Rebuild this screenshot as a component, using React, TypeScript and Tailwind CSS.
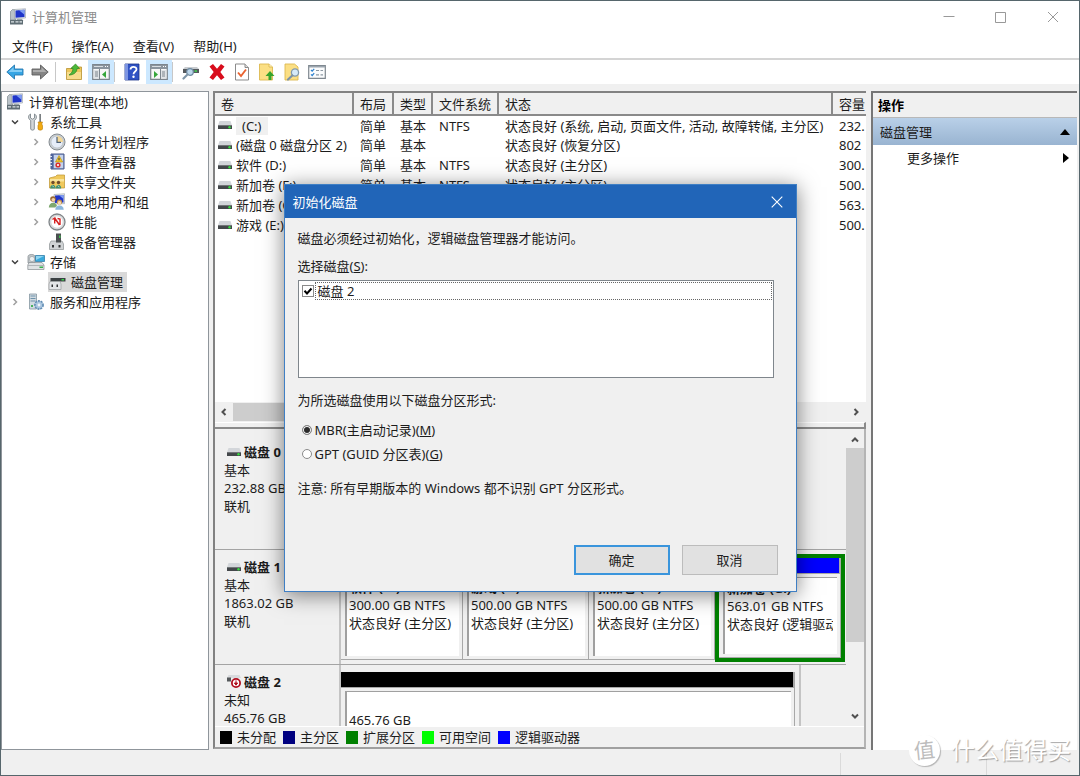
import React from "react";

type IconProps = { className?: string };

function ComputerIcon({ className = "h-[18px] w-[18px]" }: IconProps) {
  return (
    <svg viewBox="0 0 18 18" className={className}>
      <path d="M1.500 3.500l2-2 3 .5V12h-5z" fill="#b9c2c8" stroke="#6d7980" strokeWidth=".6" />
      <path d="M5.500 1.500l11-.8V10l-11 .8z" fill="#e2e6ea" stroke="#8a949b" strokeWidth=".5" />
      <path d="M6.500 2.500l9-.7v7.300l-9 .7z" fill="#1f35c9" />
      <path d="M10 2.200l5.500-.4v5z" fill="#7f9df2" />
      <path d="M8 11h5l1.500 2H7z" fill="#9aa5ac" />
      <path d="M1 12h13v4.500H1z" fill="#5f6d74" />
      <path d="M2 13.200h3v1.200H2zM6.500 13.200h3v1.200h-3zM10.500 13.200h2.500v1.200h-2.500z" fill="#dde3e6" />
    </svg>
  );
}

function ToolsIcon() {
  return (
    <svg viewBox="0 0 18 18" className="h-[18px] w-[18px]">
      <path d="M3.500 1v4l2 1.200 2-1.200V1c2.200 1 3 4.500-.2 6.500V16c0 1.500-3.600 1.500-3.600 0V7.500C.5 5.500 1.300 2 3.500 1z" fill="#d3d7d9" stroke="#7d868b" strokeWidth=".9" />
      <path d="M12.300 1h1.700v8h-1.700z" fill="#7a7f82" />
      <path d="M11 9h4.500l-.8 2 .8 1.500V16c0 1.500-4.500 1.500-4.500 0v-3.500l.8-1.500z" fill="#f2ab12" stroke="#b87b06" strokeWidth=".6" />
    </svg>
  );
}

function ClockIcon() {
  return (
    <svg viewBox="0 0 18 18" className="h-[18px] w-[18px]">
      <circle cx="9" cy="9" r="8" fill="#c9ced2" stroke="#858b90" />
      <circle cx="9" cy="9" r="6" fill="#e6edf8" stroke="#b3bac0" strokeWidth=".6" />
      <path d="M9 9V3a6 6 0 0 1 6 6z" fill="#f3d795" />
      <path d="M9 4v5.300h4" fill="none" stroke="#4c6079" strokeWidth="1.200" />
    </svg>
  );
}

function EventIcon() {
  return (
    <svg viewBox="0 0 18 18" className="h-[18px] w-[18px]">
      <path d="M3 1h13v15H3z" fill="#93a9d2" stroke="#48598b" />
      <path d="M6 2h9v13H6z" fill="#c6d3ec" />
      <path d="M3 1h2.500v15H3z" fill="#4f639b" />
      <path d="M2 3.500h2M2 6.500h2M2 9.500h2M2 12.500h2" stroke="#dfe5f2" strokeWidth="1" />
      <path d="M11 2.500l3.700 6.500H7.500z" fill="#f5c928" stroke="#b38b0a" strokeWidth=".6" />
      <path d="M11 4.800v2.500" stroke="#333" strokeWidth="1" />
      <circle cx="10" cy="12" r="2.600" fill="#d92f2f" />
      <path d="M9 11l2 2m0-2l-2 2" stroke="#fff" strokeWidth=".8" />
    </svg>
  );
}

function SharedIcon() {
  return (
    <svg viewBox="0 0 18 18" className="h-[18px] w-[18px]">
      <path d="M1.500 5l6-1.500L9 2h7.500v13h-15z" fill="#f0c95c" stroke="#bb9430" strokeWidth=".7" />
      <path d="M2 6h14v2.500H2z" fill="#f9e49c" />
      <circle cx="5" cy="9.500" r="1.700" fill="#6e4c2d" />
      <circle cx="10.500" cy="9.500" r="1.700" fill="#6e4c2d" />
      <path d="M2.200 15.500c0-5 5.400-5 5.400 0zM7.800 15.500c0-5 5.400-5 5.400 0z" fill="#3f8f70" />
      <path d="M4.300 12.500l1.500 1.700M9.800 12.500l1.500 1.700" stroke="#dff1e8" strokeWidth=".8" />
    </svg>
  );
}

function UsersIcon() {
  return (
    <svg viewBox="0 0 18 18" className="h-[18px] w-[18px]">
      <path d="M6 1.500l10.500-.8v10L6 11z" fill="#dfe3e6" stroke="#8a949b" strokeWidth=".5" />
      <path d="M7 2.500l8.500-.6v7.500L7 10z" fill="#1f35c9" />
      <path d="M11 2.200l4.500-.3v4z" fill="#7f9df2" />
      <circle cx="5" cy="6" r="2.800" fill="#9b6a34" />
      <circle cx="5.300" cy="6.800" r="1.800" fill="#f1cfa7" />
      <path d="M.8 14.500c0-6.500 8.500-6.500 8.500 0z" fill="#7da86f" />
      <circle cx="11.500" cy="9" r="2.600" fill="#c39149" />
      <circle cx="11.500" cy="9.800" r="1.700" fill="#f5d8b4" />
      <path d="M7 17c0-6.500 9-6.500 9 0z" fill="#8ab6dc" stroke="#fff" strokeWidth=".5" />
    </svg>
  );
}

function PerfIcon() {
  return (
    <svg viewBox="0 0 18 18" className="h-[18px] w-[18px]">
      <circle cx="9" cy="9" r="8" fill="#e0e2e4" stroke="#7f8487" strokeWidth="1.300" />
      <circle cx="9" cy="9" r="6.200" fill="#fff" stroke="#bcbfc1" strokeWidth=".6" />
      <path d="M4.500 6.500l2.200-1.500v5.500M6.700 5l4.800 7M9.500 5.500l2.500.500v6" fill="none" stroke="#d61f1f" strokeWidth="1.400" />
    </svg>
  );
}

function DeviceIcon() {
  return (
    <svg viewBox="0 0 18 18" className="h-[18px] w-[18px]">
      <path d="M8 .5h5V9H8z" fill="#4b4f51" />
      <path d="M11 2.500h1.500V5H11z" fill="#3fbf4f" />
      <path d="M3 8h11l1.500 3v5.500h-14V11z" fill="#d0d3d5" stroke="#8b9092" strokeWidth=".7" />
      <path d="M8 7h5v2.500H8z" fill="#4b4f51" />
      <path d="M4 12h2v2.500H4zM10.500 12h2v2.500h-2z" fill="#303335" />
    </svg>
  );
}

function StorageIcon() {
  return (
    <svg viewBox="0 0 18 18" className="h-[18px] w-[18px]">
      <path d="M1 3.500C1 .8 8 .8 8 3.500V10H1z" fill="#c2c7ca" stroke="#7e878c" strokeWidth=".7" />
      <circle cx="5" cy="6" r="2.600" fill="#eceff0" stroke="#8e979b" strokeWidth=".6" />
      <path d="M8.500 2.500h9v6h-9z" fill="#38a9dc" stroke="#2774a0" strokeWidth=".7" />
      <path d="M9 3h8L9 7z" fill="#91d6f2" />
      <path d="M2 9.500h13l2 2.500v4.500H.8V12z" fill="#dfe2e4" stroke="#858c90" strokeWidth=".7" />
      <path d="M1 12.500h16" stroke="#a4aaad" strokeWidth=".8" />
      <path d="M12.500 13.500H16V15h-3.500z" fill="#37b24d" />
    </svg>
  );
}

function DiskMgmtIcon() {
  return (
    <svg viewBox="0 0 18 18" className="h-[18px] w-[18px]">
      <path d="M4 3.500h12L17.500 5H2.500z" fill="#d4d7d9" />
      <path d="M2.500 5h15v3.500h-15z" fill="#3c4143" />
      <path d="M13.500 6h2.500v1.500h-2.500z" fill="#38d04c" />
      <path d="M2 8.500h10l1 2.500v5.500H1V11z" fill="#e4e6e8" stroke="#8d9294" strokeWidth=".6" />
      <path d="M3.500 11.500H5V14H3.500zM8.500 11.500H10V14H8.500z" fill="#303335" />
    </svg>
  );
}

function ServicesIcon() {
  return (
    <svg viewBox="0 0 18 18" className="h-[18px] w-[18px]">
      <path d="M2.500 1h7v15h-7z" fill="#d2dbe2" stroke="#8495a1" strokeWidth=".8" />
      <path d="M3.500 3h5M3.500 5.500h5M3.500 8h5" stroke="#6e93ab" strokeWidth="1.200" />
      <path d="M4 12h2v2H4z" fill="#47b35c" />
      <circle cx="12" cy="12" r="3.900" fill="#a9c5df" stroke="#5f8bb2" strokeWidth="2" strokeDasharray="1.900 .9" />
      <circle cx="12" cy="12" r="3.300" fill="#a9c5df" />
      <circle cx="12" cy="12" r="1.400" fill="#f2f6fa" />
    </svg>
  );
}

function DriveIcon() {
  return (
    <svg viewBox="0 0 14 9" className="h-[9px] w-[14px] shrink-0">
      <path d="M1.500 0h11L14 4.500H0z" fill="#d3d6da" />
      <path d="M0 4.200h14v3.800H0z" fill="#44484b" />
      <path d="M0 4.200h14v.8H0z" fill="#777b7e" />
      <circle cx="11.500" cy="6.300" r="1.200" fill="#35dc3f" />
    </svg>
  );
}

function DriveErrorIcon() {
  return (
    <svg viewBox="0 0 14 14" className="h-[14px] w-[14px] shrink-0">
      <path d="M1.500 0h11L14 3H0z" fill="#d8dadd" />
      <path d="M0 2.500h4v4H0z" fill="#55595b" />
      <circle cx="9" cy="8" r="4.100" fill="#fff" stroke="#b01020" strokeWidth="1.800" />
      <path d="M9 5.300v3M7.400 8L9 10.200 10.600 8z" stroke="#b01020" strokeWidth="1" fill="#b01020" />
    </svg>
  );
}

function BackIcon() {
  return (
    <svg viewBox="0 0 18 16" className="h-4 w-[18px]">
      <path d="M.8 8L8.500 1v4H17v6H8.500v4z" fill="#36a5e4" stroke="#2778b0" strokeWidth=".9" strokeLinejoin="round" />
      <path d="M2.500 8L7.500 3.300V6H16v2z" fill="#83cdf5" />
    </svg>
  );
}

function ForwardIcon() {
  return (
    <svg viewBox="0 0 18 16" className="h-4 w-[18px]">
      <path d="M17.200 8L9.500 1v4H1v6h8.500v4z" fill="#858585" stroke="#5e5e5e" strokeWidth=".9" strokeLinejoin="round" />
      <path d="M15.500 8l-5-4.700V6H2v2z" fill="#adadad" />
    </svg>
  );
}

function UpFolderIcon() {
  return (
    <svg viewBox="0 0 18 18" className="h-[18px] w-[18px]">
      <path d="M1.500 5.500h5l1-1.500h9v12.500h-15z" fill="#eec75c" stroke="#b99331" strokeWidth=".8" />
      <path d="M2 9h14v7H2z" fill="#f7dc8c" />
      <path d="M4 12c1-1 4-2.500 4-6.500H5.800L10.500 1l4 4.500H12c0 4-3.500 6.500-8 6.500z" fill="#4cb93a" stroke="#2e8420" strokeWidth=".7" />
    </svg>
  );
}

function PaneIcon({ mirrored = false }: { mirrored?: boolean }) {
  return (
    <svg viewBox="0 0 18 16" className="h-4 w-[18px]">
      <path d="M.7.700h16.600v14.600H.7z" fill="#f7f7f7" stroke="#7c858d" strokeWidth="1.200" />
      <path d="M1 1h16v4H1z" fill="#8a949e" />
      <path d="M2 2.500h9" stroke="#d9dee2" />
      <path d="M13 2.500h3" stroke="#fff" strokeDasharray="1 1" />
      {mirrored ? (
        <>
          <path d="M11 6h5v8.500h-5z" fill="#dfe3e6" />
          <path d="M10.500 5v10M12 8h3M12 10h3M12 12h3" stroke="#7c858d" />
          <path d="M4 7l4 3.500L4 14z" fill="#35a63a" />
        </>
      ) : (
        <>
          <path d="M2 6h5v8.500H2z" fill="#dfe3e6" />
          <path d="M7.500 5v10M3 8h3M3 10h3M3 12h3" stroke="#7c858d" />
          <path d="M14 7l-4 3.500 4 3.500z" fill="#35a63a" />
        </>
      )}
    </svg>
  );
}

function HelpIcon() {
  return (
    <svg viewBox="0 0 16 18" className="h-[18px] w-4">
      <path d="M1 1h14v16H1z" fill="#2f52c4" stroke="#1d368c" strokeWidth=".8" />
      <path d="M1 1h3v16H1z" fill="#7d95e2" />
      <path d="M6.500 6.500c0-3.500 6-3.500 6-.2C12.500 8.500 9.500 8.500 9.500 11.200" fill="none" stroke="#fff" strokeWidth="1.800" />
      <circle cx="9.500" cy="13.800" r="1.200" fill="#fff" />
    </svg>
  );
}

function ConnectIcon() {
  return (
    <svg viewBox="0 0 18 18" className="h-[18px] w-[18px]">
      <path d="M3 4h12l2 2H1z" fill="#c8ccd0" />
      <path d="M1 6h16v4H1z" fill="#55595d" />
      <path d="M12.500 7.300H15v1.500h-2.500z" fill="#3fd44d" />
      <circle cx="8" cy="9" r="3.300" fill="#bcd7ec" stroke="#6f8aa0" strokeWidth="1.200" />
      <path d="M5.500 11.500L1.500 15.500" stroke="#7e95a8" strokeWidth="2.200" strokeLinecap="round" />
    </svg>
  );
}

function DeleteIcon() {
  return (
    <svg viewBox="0 0 18 18" className="h-[18px] w-[18px]">
      <path d="M1.500 3.500L5 1l4 4.800L13 1l3.500 2.500L12.300 9l4.200 5.500L13 17l-4-4.800L5 17l-3.500-2.500L5.700 9z" fill="#d80d1c" />
    </svg>
  );
}

function CheckDocIcon() {
  return (
    <svg viewBox="0 0 16 18" className="h-[18px] w-4">
      <path d="M1.500 1h9.500l3.500 3.500V17h-13z" fill="#fff" stroke="#8b8b8b" />
      <path d="M11 1v3.500h3.500" fill="#ddd" stroke="#8b8b8b" />
      <path d="M4 9.500l3 3.500 5-6.500" fill="none" stroke="#ea6330" strokeWidth="1.900" />
    </svg>
  );
}

function ExportIcon() {
  return (
    <svg viewBox="0 0 17 18" className="h-[18px] w-[17px]">
      <path d="M1.500 1H11l3.500 3v13h-13z" fill="#fbdf84" stroke="#dcb950" strokeWidth=".9" />
      <path d="M11 1v3h3.500" fill="#fff3c6" stroke="#dcb950" strokeWidth=".9" />
      <path d="M12 8l4.500 5h-3v4h-3v-4h-3z" fill="#37a42c" />
    </svg>
  );
}

function SearchDocIcon() {
  return (
    <svg viewBox="0 0 17 18" className="h-[18px] w-[17px]">
      <path d="M2 1h9.500L15 4v13H2z" fill="#fbdf84" stroke="#dcb950" strokeWidth=".9" />
      <circle cx="12" cy="9.500" r="3.600" fill="#d6eaf8" stroke="#8199ad" strokeWidth="1.300" />
      <path d="M9.300 12.500L5 16.500" stroke="#7d93a6" strokeWidth="2.200" strokeLinecap="round" />
    </svg>
  );
}

function ListIcon() {
  return (
    <svg viewBox="0 0 18 14" className="h-[14px] w-[18px]">
      <path d="M.7.700h16.600v12.600H.7z" fill="#fbfcfd" stroke="#7f8890" strokeWidth="1.200" />
      <path d="M1 1h16v1.500H1z" fill="#9aa4ad" />
      <path d="M3 5l1.200 1.200 2-2.400M3 9.300l1.200 1.200 2-2.400" fill="none" stroke="#2f83cf" strokeWidth="1.200" />
      <path d="M8 5.500h3M12.500 5.500H15M8 9.800h3M12.500 9.800H15" stroke="#8c98a3" strokeWidth="1.200" />
    </svg>
  );
}

function Chevron({ dir, className }: { dir: "up" | "down" | "left" | "right"; className: string }) {
  const d = {
    up: "M2 6.500L5 3.500l3 3",
    down: "M2 3.500l3 3 3-3",
    left: "M6.500 2l-3 3 3 3",
    right: "M3.500 2l3 3-3 3",
  }[dir];
  return (
    <svg viewBox="0 0 10 10" className={className} fill="none" stroke="currentColor">
      <path d={d} />
    </svg>
  );
}

type Node = { label: string; icon: React.ReactNode; level: 0 | 1 | 2; state?: "open" | "closed"; selected?: boolean };

const tree: Node[] = [
  { label: "计算机管理(本地)", icon: <ComputerIcon />, level: 0 },
  { label: "系统工具", icon: <ToolsIcon />, level: 1, state: "open" },
  { label: "任务计划程序", icon: <ClockIcon />, level: 2, state: "closed" },
  { label: "事件查看器", icon: <EventIcon />, level: 2, state: "closed" },
  { label: "共享文件夹", icon: <SharedIcon />, level: 2, state: "closed" },
  { label: "本地用户和组", icon: <UsersIcon />, level: 2, state: "closed" },
  { label: "性能", icon: <PerfIcon />, level: 2, state: "closed" },
  { label: "设备管理器", icon: <DeviceIcon />, level: 2 },
  { label: "存储", icon: <StorageIcon />, level: 1, state: "open" },
  { label: "磁盘管理", icon: <DiskMgmtIcon />, level: 2, selected: true },
  { label: "服务和应用程序", icon: <ServicesIcon />, level: 1, state: "closed" },
];

function TreeRow({ node }: { node: Node }) {
  return (
    <li className={`flex h-5 items-center ${node.level === 2 ? "pl-[25px]" : "pl-1"}`}>
      {node.level > 0 && (
        <span className="flex w-[21px] items-center justify-center pr-1">
          {node.state === "open" && <Chevron dir="down" className="h-[10px] w-[10px] stroke-[1.5] text-[#404040]" />}
          {node.state === "closed" && <Chevron dir="right" className="h-[10px] w-[10px] stroke-[1.5] text-[#a0a0a0]" />}
        </span>
      )}
      <span className={`flex h-5 items-center gap-[5px] pr-1 ${node.selected ? "bg-[#d9d9d9]" : ""}`}>
        {node.icon}
        {node.label}
      </span>
    </li>
  );
}

const volumes = [
  ["(C:)", "NTFS", "状态良好 (系统, 启动, 页面文件, 活动, 故障转储, 主分区)", "232."],
  ["(磁盘 0 磁盘分区 2)", "", "状态良好 (恢复分区)", "802"],
  ["软件 (D:)", "NTFS", "状态良好 (主分区)", "300."],
  ["新加卷 (F:)", "NTFS", "状态良好 (主分区)", "500."],
  ["新加卷 (G:)", "NTFS", "状态良好 (逻辑驱动器)", "563."],
  ["游戏 (E:)", "NTFS", "状态良好 (主分区)", "500."],
];

const headCell = "border-r-2 border-[#8a8a8a] pl-[6px] text-left font-normal";

function VolumeList() {
  return (
    <section className="flex h-[338px] shrink-0 flex-col border-t-2 border-l-2 border-[#828282]">
      <div className="min-h-0 flex-1 overflow-hidden bg-white">
        <table className="w-full table-fixed border-collapse whitespace-nowrap">
          <colgroup>
            <col className="w-[138px]" />
            <col className="w-10" />
            <col className="w-[39px]" />
            <col className="w-[66px]" />
            <col className="w-[334px]" />
            <col />
          </colgroup>
          <thead>
            <tr className="h-[22px] border-b-2 border-[#8a8a8a] bg-[#f0f0f0]">
              <th className={headCell}>卷</th>
              <th className={headCell}>布局</th>
              <th className={headCell}>类型</th>
              <th className={headCell}>文件系统</th>
              <th className={headCell}>状态</th>
              <th className="overflow-hidden pl-[6px] text-left font-normal">容量</th>
            </tr>
          </thead>
          <tbody>
            {volumes.map(([name, fs, status, size], i) => (
              <tr key={i} className="h-5">
                <td className="overflow-hidden pl-[3px]">
                  <span className="flex items-center gap-1">
                    <DriveIcon />
                    <span className={i === 0 ? "bg-[#f0f0f0] px-[6px]" : ""}>{name}</span>
                  </span>
                </td>
                <td className="pl-[7px]">简单</td>
                <td className="pl-[7px]">基本</td>
                <td className="pl-[7px]">{fs}</td>
                <td className="pl-[7px]">{status}</td>
                <td className="overflow-hidden pl-[7px]">{size}</td>
              </tr>
            ))}
          </tbody>
        </table>
      </div>
      <div className="flex h-5 items-center bg-[#f0f0f0] text-[#505050]">
        <button aria-label="向左滚动" className="flex w-[18px] justify-center">
          <Chevron dir="left" className="h-[10px] w-[10px] stroke-2" />
        </button>
        <div className="h-[18px] w-1/2 bg-[#cdcdcd]" />
        <button aria-label="向右滚动" className="ml-auto flex w-5 justify-center">
          <Chevron dir="right" className="h-[10px] w-[10px] stroke-2" />
        </button>
      </div>
      <div className="h-[7px] border-t border-r-2 border-b-2 border-t-white border-r-[#8a8a8a] border-b-[#8a8a8a] bg-[#f0f0f0]" />
    </section>
  );
}

function Partition({ name, lines, bar, className }: { name: string; lines: string[]; bar: string; className: string }) {
  return (
    <div className={`flex flex-col border-r border-b border-[#a8a8a8] pb-[3px] ${className}`}>
      <div className={`h-4 shrink-0 border-r border-b border-[#a8a8a8] ${bar}`} />
      <div className="mt-[3px] mr-[3px] ml-1 h-20 border-t border-l-2 border-[#a0a0a0] bg-white pt-px pr-1 pl-[2px]">
        <div className="overflow-hidden leading-[18px] whitespace-nowrap">
          <div className="h-[18px] font-bold">{name}</div>
          {lines.map((l) => (
            <div key={l}>{l}</div>
          ))}
        </div>
      </div>
    </div>
  );
}

function DiskRow({
  name,
  info,
  error = false,
  children,
}: {
  name: string;
  info: string[];
  error?: boolean;
  children?: React.ReactNode;
}) {
  return (
    <div className="flex h-[115px] shrink-0 border-b border-[#a4a4a4]">
      <div className="w-[126px] shrink-0 border-r-2 border-[#c4c4c4] pt-2 pl-[9px] leading-[18px]">
        <div className="flex items-center gap-[3px] pl-[3px] font-bold">
          {error ? <DriveErrorIcon /> : <DriveIcon />}
          <span>{name}</span>
        </div>
        {info.map((t) => (
          <div key={t}>{t}</div>
        ))}
      </div>
      {children}
    </div>
  );
}

const legend = [
  ["未分配", "bg-black"],
  ["主分区", "bg-[#000080]"],
  ["扩展分区", "bg-[#008000]"],
  ["可用空间", "bg-[#00ff00]"],
  ["逻辑驱动器", "bg-[#0000ff]"],
];

function DiskPane() {
  return (
    <section className="flex min-h-0 flex-1 flex-col border-r-2 border-b-2 border-l-2 border-r-[#b4b4b4] border-b-[#a0a0a0] border-l-[#828282]">
      <div className="flex min-h-0 flex-1">
        <div className="flex min-w-0 flex-1 flex-col overflow-hidden pt-[6px]">
          <DiskRow name="磁盘 0" info={["基本", "232.88 GB", "联机"]} />
          <DiskRow name="磁盘 1" info={["基本", "1863.02 GB", "联机"]}>
            <div className="flex">
              <Partition name="软件  (D:)" lines={["300.00 GB NTFS", "状态良好 (主分区)"]} bar="bg-[#000080]" className="mt-[7px] h-[103px] w-[122px]" />
              <Partition name="游戏  (E:)" lines={["500.00 GB NTFS", "状态良好 (主分区)"]} bar="bg-[#000080]" className="mt-[7px] h-[103px] w-[126px]" />
              <Partition name="新加卷  (H:)" lines={["500.00 GB NTFS", "状态良好 (主分区)"]} bar="bg-[#000080]" className="mt-[7px] h-[103px] w-[126px]" />
              <div className="mt-1 h-[108px] w-[130px] border-4 border-[#008000]">
                <Partition name="新加卷  (G:)" lines={["563.01 GB NTFS", "状态良好 (逻辑驱动器)"]} bar="bg-[#0000ff]" className="h-full" />
              </div>
            </div>
          </DiskRow>
          <DiskRow name="磁盘 2" info={["未知", "465.76 GB"]} error>
            <div className="flex border-r-2 border-[#c4c4c4] pr-1">
              <Partition name="" lines={["465.76 GB"]} bar="bg-black" className="mt-[7px] w-[454px]" />
            </div>
          </DiskRow>
        </div>
        <div className="flex w-[18px] shrink-0 flex-col items-center pt-[3px] text-[#505050]">
          <button aria-label="向上滚动" className="flex h-4 items-center">
            <Chevron dir="up" className="h-[10px] w-[10px] stroke-2" />
          </button>
          <div className="w-full flex-1 bg-[#cdcdcd]" />
          <button aria-label="向下滚动" className="mt-16 flex h-5 items-center">
            <Chevron dir="down" className="h-[10px] w-[10px] stroke-2" />
          </button>
        </div>
      </div>
      <div className="flex h-[21px] shrink-0 items-center gap-[7px] border-t border-white pl-[5px] whitespace-nowrap">
        {legend.map(([label, color]) => (
          <span key={label} className="flex items-center gap-[5px]">
            <span className={`h-[13px] w-3 ${color}`} />
            {label}
          </span>
        ))}
      </div>
    </section>
  );
}

function InitDialog() {
  return (
    <div className="absolute inset-0 flex items-center justify-center">
      <div role="dialog" aria-label="初始化磁盘" className="flex h-[408px] w-[513px] flex-col border border-[#3f7fc4] bg-[#f0f0f0] shadow-[0_3px_20px_rgba(0,0,0,0.5)]">
        <div className="flex h-[33px] shrink-0 items-center justify-between bg-[#2165b8] pr-3 pl-2 text-white">
          <span>初始化磁盘</span>
          <button aria-label="关闭" className="p-px">
            <svg viewBox="0 0 12 12" className="h-3 w-3" stroke="#fff" strokeWidth="1.100">
              <path d="M.7.700l10.600 10.600M11.300.700L.7 11.300" />
            </svg>
          </button>
        </div>
        <div className="flex flex-1 flex-col pt-[10px] pr-[18px] pb-4 pl-[13px] leading-5">
          <p>磁盘必须经过初始化，逻辑磁盘管理器才能访问。</p>
          <p className="mt-2">
            选择磁盘(<u>S</u>):
          </p>
          <div className="mt-1 mr-1 h-[98px] border border-[#7f868c] bg-white p-px">
            <label className="flex h-[18px] items-center gap-px">
              <span className="ml-[2px] grid">
                <input type="checkbox" defaultChecked className="peer col-start-1 row-start-1 h-3 w-3 appearance-none border border-[#8a8a8a] bg-white" />
                <svg viewBox="0 0 12 12" className="invisible col-start-1 row-start-1 h-3 w-3 peer-checked:visible" fill="none" stroke="#000" strokeWidth="2">
                  <path d="M2.500 5.800L5 8.500l4.500-5" />
                </svg>
              </span>
              <span className="h-[18px] flex-1 border border-dotted border-[#666] pl-[2px] leading-4">磁盘 2</span>
            </label>
          </div>
          <p className="mt-3">为所选磁盘使用以下磁盘分区形式:</p>
          <label className="mt-[10px] flex items-center gap-[3px] pl-1">
            <input type="radio" name="style" defaultChecked className="h-[10px] w-[10px] appearance-none rounded-full border border-[#8a8a8a] bg-white checked:bg-[#2b2b2b] checked:shadow-[inset_0_0_0_1px_#fff]" />
            <span>
              MBR(主启动记录)(<u>M</u>)
            </span>
          </label>
          <label className="mt-1 flex items-center gap-[3px] pl-1">
            <input type="radio" name="style" className="h-[10px] w-[10px] appearance-none rounded-full border border-[#8a8a8a] bg-white checked:bg-[#2b2b2b] checked:shadow-[inset_0_0_0_1px_#fff]" />
            <span>
              GPT (GUID 分区表)(<u>G</u>)
            </span>
          </label>
          <p className="mt-[14px]">注意: 所有早期版本的 Windows 都不识别 GPT 分区形式。</p>
          <div className="mt-auto flex justify-end gap-3">
            <button className="h-[30px] w-24 border-2 border-[#3a95dc] bg-[#e1e1e1]">确定</button>
            <button className="h-[30px] w-24 border border-[#bcbcbc] bg-[#e1e1e1]">取消</button>
          </div>
        </div>
      </div>
    </div>
  );
}

function Toolbar() {
  const sep = <span className="h-5 w-px bg-[#c8c8c8]" />;
  return (
    <div className="flex h-6 shrink-0 items-center bg-white pl-[5px]">
      <button aria-label="后退"><BackIcon /></button>
      <button aria-label="前进" className="mr-[6px] ml-[7px]"><ForwardIcon /></button>
      {sep}
      <button aria-label="上一级" className="mr-[5px] ml-[9px]"><UpFolderIcon /></button>
      <button aria-label="显示/隐藏控制台树" className="flex h-6 w-[26px] items-center justify-center bg-[#cce8ff]"><PaneIcon /></button>
      {sep}
      <button aria-label="帮助" className="mr-[6px] ml-[9px]"><HelpIcon /></button>
      <button aria-label="显示/隐藏操作窗格" className="flex h-6 w-[26px] items-center justify-center bg-[#cce8ff]"><PaneIcon mirrored /></button>
      {sep}
      <div className="flex items-center gap-2 pl-[9px]">
        <button aria-label="连接"><ConnectIcon /></button>
        <button aria-label="删除"><DeleteIcon /></button>
        <button aria-label="属性"><CheckDocIcon /></button>
        <button aria-label="导出"><ExportIcon /></button>
        <button aria-label="查找"><SearchDocIcon /></button>
        <button aria-label="列表"><ListIcon /></button>
      </div>
    </div>
  );
}

export default function App() {
  return (
    <div className="relative flex h-screen flex-col overflow-hidden border border-[#56666c] bg-[#f0f0f0] font-['Noto_Sans','Noto_Sans_CJK_SC',sans-serif] text-[13px] leading-[18px] text-[#1c1c1c]">
      <header className="flex h-8 shrink-0 items-center bg-white pl-2 text-[#8c8c8c]">
        <ComputerIcon />
        <h1 className="ml-[5px] flex-1">计算机管理</h1>
        <div className="flex items-center gap-10 pr-5 text-[#999]">
          <button aria-label="最小化">
            <svg viewBox="0 0 12 12" className="h-3 w-3" stroke="currentColor"><path d="M.5 5.500h11" /></svg>
          </button>
          <button aria-label="最大化">
            <svg viewBox="0 0 12 12" className="h-3 w-3" fill="none" stroke="currentColor"><path d="M.5 1.500h10v10H.5z" /></svg>
          </button>
          <button aria-label="关闭">
            <svg viewBox="0 0 12 12" className="h-3 w-3" stroke="currentColor"><path d="M1 1l10 10M11 1L1 11" /></svg>
          </button>
        </div>
      </header>
      <nav className="flex h-[27px] shrink-0 items-center gap-[19px] border-b-2 border-[#d4d4d4] bg-white pl-[11px]">
        {["文件(F)", "操作(A)", "查看(V)", "帮助(H)"].map((m) => (
          <button key={m}>{m}</button>
        ))}
      </nav>
      <Toolbar />
      <main className="flex min-h-0 flex-1 pt-[7px]">
        <aside className="mb-px w-[208px] shrink-0 border border-[#8f959b] bg-white">
          <ul>
            {tree.map((n) => (
              <TreeRow key={n.label} node={n} />
            ))}
          </ul>
        </aside>
        <div className="mr-[5px] mb-[2px] ml-1 flex min-w-0 flex-1 flex-col">
          <VolumeList />
          <DiskPane />
        </div>
        <aside className="mr-[2px] mb-px flex w-[206px] shrink-0 flex-col border-t-2 border-l-2 border-[#767676] bg-white">
          <h2 className="flex h-[25px] items-center border-b border-[#b8b8b8] bg-[#f0f0f0] pl-[5px] font-bold text-black">操作</h2>
          <div className="flex h-[27px] items-center justify-between bg-linear-to-b from-[#b9d0e8] to-[#99b4d1] pr-[7px] pl-[7px]">
            <span>磁盘管理</span>
            <svg viewBox="0 0 10 6" className="h-[6px] w-[10px]"><path d="M0 6l5-6 5 6z" /></svg>
          </div>
          <button className="flex h-[26px] items-center justify-between pr-2 pl-[34px]">
            <span>更多操作</span>
            <svg viewBox="0 0 6 10" className="h-[10px] w-[6px]"><path d="M0 0l6 5-6 5z" /></svg>
          </button>
        </aside>
      </main>
      <footer className="flex h-6 shrink-0 justify-end pt-[2px]">
        <span className="w-[146px] border-l border-[#dadada]" />
        <span className="w-[93px] border-l border-[#dadada]" />
      </footer>
      <InitDialog />
      <div className="absolute right-2 bottom-[9px] flex items-center gap-[11px]">
        <span className="flex h-[31px] w-[31px] items-center justify-center rounded-full bg-white text-[21px] leading-none text-[#bdbdbd] shadow-[1px_1px_1px_rgba(0,0,0,0.25)]">
          <span className="-rotate-6">值</span>
        </span>
        <span className="text-[24px] leading-8 text-white text-shadow-[1px_1px_1px_rgba(0,0,0,0.35)]">什么值得买</span>
      </div>
    </div>
  );
}
